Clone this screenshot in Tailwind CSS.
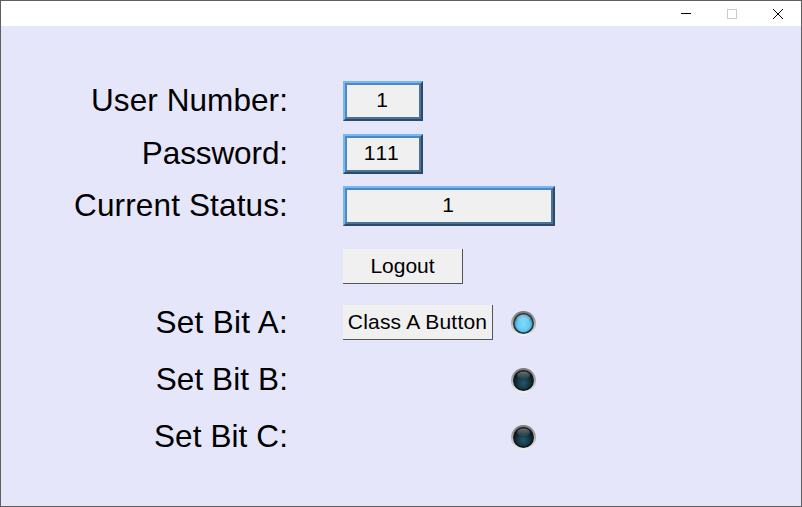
<!DOCTYPE html>
<html lang="en">

<head>
    <meta charset="utf-8" />
    <meta name="viewport" content="width=device-width, initial-scale=1" />
    <title>Login</title>
    <script src="https://cdn.jsdelivr.net/npm/@tailwindcss/browser@4"></script>
</head>

<body class="bg-[#e6e6fa] font-['Liberation_Sans',Arial,sans-serif] text-black overflow-hidden">
    <svg width="0" height="0" class="absolute">
        <defs>
            <linearGradient id="ledRing" x1="0" y1="0" x2="0" y2="1">
                <stop offset="0" stop-color="#777777" />
                <stop offset="0.5" stop-color="#b0b0b0" />
                <stop offset="1" stop-color="#f5f5f5" />
            </linearGradient>
            <radialGradient id="ledOn" cx="0.5" cy="0.55" r="0.5">
                <stop offset="0" stop-color="#7fdcfb" />
                <stop offset="0.7" stop-color="#63c8f2" />
                <stop offset="1" stop-color="#3a8fb5" />
            </radialGradient>
            <radialGradient id="ledOff" cx="0.5" cy="0.65" r="0.55">
                <stop offset="0" stop-color="#25596b" />
                <stop offset="0.55" stop-color="#163a48" />
                <stop offset="1" stop-color="#0d1a20" />
            </radialGradient>
            <linearGradient id="ledShine" x1="0" y1="0" x2="0" y2="1">
                <stop offset="0" stop-color="#ffffff" stop-opacity="0.4" />
                <stop offset="1" stop-color="#ffffff" stop-opacity="0" />
            </linearGradient>
        </defs>
    </svg>

    <div class="w-[802px] h-[507px] flex flex-col border border-t-0 border-[#5f5f5f]">
        <!-- title bar -->
        <div class="h-[26px] shrink-0 bg-white border-t border-[#5f5f5f] flex justify-end">
            <div class="w-[46px] h-[25px] flex items-center justify-center">
                <svg width="10" height="10" viewBox="0 0 10 10"><path d="M0 4.5H10" stroke="#000" stroke-width="1" /></svg>
            </div>
            <div class="w-[46px] h-[25px] flex items-center justify-center">
                <svg width="10" height="10" viewBox="0 0 10 10"><rect x="0.5" y="0.5" width="9" height="9" fill="none" stroke="#cccccc" stroke-width="1" /></svg>
            </div>
            <div class="w-[46px] h-[25px] flex items-center justify-center">
                <svg width="10" height="10" viewBox="0 0 10 10"><path d="M0 0L10 10M10 0L0 10" stroke="#000" stroke-width="1" /></svg>
            </div>
        </div>

        <!-- form -->
        <div class="flex-1 bg-[#e6e6fa] pt-[55px] grid grid-cols-[287px_1fr] gap-x-[55px] content-start text-[31.5px] leading-none">
            <div class="h-[40px] flex items-center justify-end tracking-[0.08px]">User Number:</div>
            <div class="w-[80px] h-[40px] border-2 border-t-[#78b8f2] border-l-[#78b8f2] border-b-[#2f4a68] border-r-[#2f4a68]">
                <div class="h-full bg-[#f0f0f0] border-2 border-t-[#4c89c2] border-l-[#4c89c2] border-b-[#4a7399] border-r-[#4a7399] flex items-center justify-center text-[21px] pb-[3px] pr-[2px]">1</div>
            </div>

            <div class="h-[40px] mt-[13px] flex items-center justify-end tracking-[-0.1px]">Password:</div>
            <div class="w-[80px] h-[40px] mt-[13px] border-2 border-t-[#78b8f2] border-l-[#78b8f2] border-b-[#2f4a68] border-r-[#2f4a68]">
                <div class="h-full bg-[#f0f0f0] border-2 border-t-[#4c89c2] border-l-[#4c89c2] border-b-[#4a7399] border-r-[#4a7399] flex items-center justify-center text-[21px] tracking-[1.5px] pb-[3px] pr-[2px]">111</div>
            </div>

            <div class="h-[40px] mt-[12px] flex items-center justify-end tracking-[0.14px]">Current Status:</div>
            <div class="w-[212px] h-[40px] mt-[12px] border-2 border-t-[#78b8f2] border-l-[#78b8f2] border-b-[#2f4a68] border-r-[#2f4a68]">
                <div class="h-full bg-[#f0f0f0] border-2 border-t-[#4c89c2] border-l-[#4c89c2] border-b-[#4a7399] border-r-[#4a7399] flex items-center justify-center text-[21px] pb-[3px] pr-[2px]">1</div>
            </div>

            <div class="h-[35px] mt-[23px]"></div>
            <button class="w-[120px] h-[35px] mt-[23px] bg-[#f0f0f0] border-r border-b border-[#555555] text-[21px] pb-[2px]">Logout</button>

            <div class="h-[35px] mt-[21px] flex items-center justify-end tracking-[0.3px]">Set Bit A:</div>
            <div class="h-[35px] mt-[21px] flex items-center">
                <button class="w-[150px] h-[35px] bg-[#f0f0f0] border-r border-b border-[#555555] text-[21px] tracking-[0.2px] pb-[2px]">Class A Button</button>
                <svg class="ml-[18px] mt-[2px]" width="25" height="25" viewBox="0 0 25 25">
                    <circle cx="12.5" cy="12.5" r="12.5" fill="url(#ledRing)" />
                    <circle cx="12.5" cy="12.5" r="10.5" fill="#26343a" />
                    <circle cx="12.5" cy="12.5" r="9" fill="url(#ledOn)" />
                    <ellipse cx="12.5" cy="7.5" rx="6.5" ry="4" fill="url(#ledShine)" />
                </svg>
            </div>

            <div class="h-[35px] mt-[22px] flex items-center justify-end tracking-[0.1px]">Set Bit B:</div>
            <div class="h-[35px] mt-[22px] flex items-center pl-[168px]">
                <svg class="mt-[2px]" width="25" height="25" viewBox="0 0 25 25">
                    <circle cx="12.5" cy="12.5" r="12.5" fill="url(#ledRing)" />
                    <circle cx="12.5" cy="12.5" r="10.5" fill="#12181b" />
                    <circle cx="12.5" cy="12.5" r="9" fill="url(#ledOff)" />
                    <ellipse cx="12.5" cy="7.5" rx="6.5" ry="4" fill="url(#ledShine)" />
                </svg>
            </div>

            <div class="h-[35px] mt-[22px] flex items-center justify-end tracking-[0.1px]">Set Bit C:</div>
            <div class="h-[35px] mt-[22px] flex items-center pl-[168px]">
                <svg class="mt-[2px]" width="25" height="25" viewBox="0 0 25 25">
                    <circle cx="12.5" cy="12.5" r="12.5" fill="url(#ledRing)" />
                    <circle cx="12.5" cy="12.5" r="10.5" fill="#12181b" />
                    <circle cx="12.5" cy="12.5" r="9" fill="url(#ledOff)" />
                    <ellipse cx="12.5" cy="7.5" rx="6.5" ry="4" fill="url(#ledShine)" />
                </svg>
            </div>
        </div>
    </div>
</body>

</html>
